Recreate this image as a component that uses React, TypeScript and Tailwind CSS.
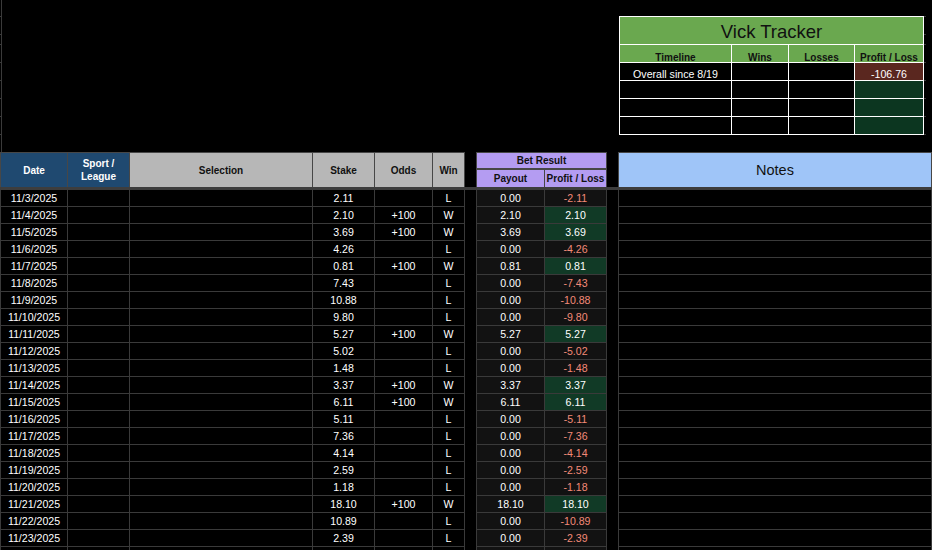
import React from "react";

type Row = { d: string; stake: string; odds: string; win: string; pay: string; pl: string };

const raw: [string, string, string, string][] = [
  ["11/3/2025", "2.11", "", "L"],
  ["11/4/2025", "2.10", "+100", "W"],
  ["11/5/2025", "3.69", "+100", "W"],
  ["11/6/2025", "4.26", "", "L"],
  ["11/7/2025", "0.81", "+100", "W"],
  ["11/8/2025", "7.43", "", "L"],
  ["11/9/2025", "10.88", "", "L"],
  ["11/10/2025", "9.80", "", "L"],
  ["11/11/2025", "5.27", "+100", "W"],
  ["11/12/2025", "5.02", "", "L"],
  ["11/13/2025", "1.48", "", "L"],
  ["11/14/2025", "3.37", "+100", "W"],
  ["11/15/2025", "6.11", "+100", "W"],
  ["11/16/2025", "5.11", "", "L"],
  ["11/17/2025", "7.36", "", "L"],
  ["11/18/2025", "4.14", "", "L"],
  ["11/19/2025", "2.59", "", "L"],
  ["11/20/2025", "1.18", "", "L"],
  ["11/21/2025", "18.10", "+100", "W"],
  ["11/22/2025", "10.89", "", "L"],
  ["11/23/2025", "2.39", "", "L"],
];

const rows: Row[] = raw.map(([d, stake, odds, win]) => ({
  d,
  stake,
  odds,
  win,
  pay: win === "W" ? stake : "0.00",
  pl: win === "W" ? stake : "-" + stake,
}));

const cols = "grid grid-cols-[68px_62px_183px_62px_58px_32px_12px_68px_62px_12px_313px]";
const line = "border-[#3a3a3a]";
const hline = "border-[#474747]";

function Tracker() {
  const cell = "h-[18px] pt-[7px] border-r border-b border-white flex items-center justify-center";
  const hd = `${cell} bg-[#6aa84f] text-[#111] font-bold text-[10px]`;
  return (
    <div className="w-[305px] border-l border-t border-white text-[10.6px]">
      <div className="h-[28px] pt-[2px] bg-[#6aa84f] border-r border-b border-white flex items-center justify-center text-[18.5px] text-[#111]">
        Vick Tracker
      </div>
      <div className="grid grid-cols-[112px_57px_66px_69px]">
        {["Timeline", "Wins", "Losses", "Profit / Loss"].map((h) => (
          <div key={h} className={hd}>
            {h}
          </div>
        ))}
        <div className={`${cell} text-white`}>Overall since 8/19</div>
        <div className={cell}></div>
        <div className={cell}></div>
        <div className={`${cell} bg-[#5a271f] text-white`}>-106.76</div>
        {[0, 1, 2].map((i) => (
          <React.Fragment key={i}>
            <div className={cell}></div>
            <div className={cell}></div>
            <div className={cell}></div>
            <div className={`${cell} bg-[#0c3620]`}></div>
          </React.Fragment>
        ))}
      </div>
    </div>
  );
}

function Ticks() {
  return (
    <div className="flex flex-col w-[2px]">
      <div className={`h-[17px] border-b ${line}`}></div>
      <div className={`h-[18px] border-b ${line}`}></div>
      <div className={`h-[10px] border-b ${line}`}></div>
      <div className={`h-[18px] border-b ${line}`}></div>
      <div className={`h-[18px] border-b ${line}`}></div>
      <div className={`h-[18px] border-b ${line}`}></div>
      <div className={`h-[18px] border-b ${line}`}></div>
      <div className={`h-[18px] border-b ${line}`}></div>
    </div>
  );
}

export default function App() {
  const h = `flex items-center justify-center border-t border-r ${hline} text-center leading-[13px] font-bold text-[10px]`;
  const c = `h-[17px] pt-[2px] flex items-center justify-center border-r border-b ${line}`;
  return (
    <div className="w-[932px] h-[550px] overflow-hidden bg-black text-white text-[10.6px] font-['Liberation_Sans',Arial,sans-serif]">
      {/* top area */}
      <div className="h-[152px] flex">
        <div className={`border-r ${line} w-[2px]`}>
          <Ticks />
        </div>
        <div className="w-[617px]"></div>
        <div className="pt-[16px]">
          <Tracker />
        </div>
        <div className="flex-1">
          <Ticks />
        </div>
      </div>

      {/* header */}
      <div className={`${cols} grid-rows-[17px_18px]`}>
        <div className={`${h} row-span-2 bg-[#1f4970] text-white border-l`}>Date</div>
        <div className={`${h} row-span-2 bg-[#1f4970] text-white`}>
          Sport /<br />
          League
        </div>
        <div className={`${h} row-span-2 bg-[#b7b7b7] text-[#111]`}>Selection</div>
        <div className={`${h} row-span-2 bg-[#b7b7b7] text-[#111]`}>Stake</div>
        <div className={`${h} row-span-2 bg-[#b7b7b7] text-[#111]`}>Odds</div>
        <div className={`${h} row-span-2 bg-[#b7b7b7] text-[#111]`}>Win</div>
        <div className={`row-span-2 border-r ${hline}`}></div>
        <div className={`${h} col-span-2 bg-[#b49cf2] text-[#111] border-b`}>Bet Result</div>
        <div className={`row-span-2 border-r ${hline}`}></div>
        <div className={`flex items-center justify-center pt-[1px] border-t border-r ${hline} row-span-2 bg-[#9fc5f8] text-[#111] text-[14.5px]`}>
          Notes
        </div>
        <div className={`${h} bg-[#b49cf2] text-[#111]`}>Payout</div>
        <div className={`${h} bg-[#b49cf2] text-[#111]`}>Profit / Loss</div>
      </div>
      <div className="h-[3px] bg-[#3d3d3d]"></div>

      {/* rows */}
      {rows.map((r) => (
        <div key={r.d} className={cols}>
          <div className={`${c} border-l`}>{r.d}</div>
          <div className={c}></div>
          <div className={c}></div>
          <div className={c}>{r.stake}</div>
          <div className={c}>{r.odds}</div>
          <div className={c}>{r.win}</div>
          <div className={`h-[17px] border-r ${line}`}></div>
          <div className={`${c} bg-[#121212]`}>{r.pay}</div>
          {r.win === "W" ? (
            <div className={`${c} bg-[#113a26]`}>{r.pl}</div>
          ) : (
            <div className={`${c} bg-[#121212] text-[#f28a78]`}>{r.pl}</div>
          )}
          <div className={`h-[17px] border-r ${line}`}></div>
          <div className={c}></div>
        </div>
      ))}
      <div className={cols}>
        <div className={`${c} border-l`}></div>
        <div className={c}></div>
        <div className={c}></div>
        <div className={c}></div>
        <div className={c}></div>
        <div className={c}></div>
        <div className={`h-[17px] border-r ${line}`}></div>
        <div className={`${c} bg-[#121212]`}></div>
        <div className={`${c} bg-[#121212]`}></div>
        <div className={`h-[17px] border-r ${line}`}></div>
        <div className={c}></div>
      </div>
    </div>
  );
}
